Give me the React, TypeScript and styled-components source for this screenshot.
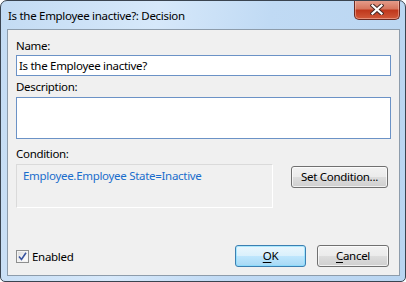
import React from "react";
import styled, { createGlobalStyle } from "styled-components";

const GlobalStyle = createGlobalStyle`
  html, body {
    margin: 0;
    padding: 0;
    background: #ffffff;
  }
  body {
    font-family: "Noto Sans", "Open Sans", sans-serif;
    font-size: 11.5px;
    letter-spacing: -0.3px;
    color: #000;
  }
`;

const Window = styled.div`
  box-sizing: border-box;
  width: 406px;
  height: 282px;
  display: flex;
  flex-direction: column;
  border: 1px solid #3a4450;
  border-radius: 7px 7px 5px 5px;
  background: linear-gradient(100deg, #c3dbf3 0%, #d6e8fa 35%, #c0daf4 60%, #b9d5f1 100%);
  overflow: hidden;
`;

const TitleBar = styled.div`
  height: 28px;
  display: flex;
  justify-content: space-between;
  align-items: flex-start;
  padding: 0 5px 0 7px;
`;

const TitleText = styled.div`
  margin-top: 7px;
  line-height: 16px;
  font-size: 11.5px;
  color: #000;
`;

const CloseButton = styled.div`
  box-sizing: border-box;
  width: 46px;
  height: 20px;
  margin-top: -1px;
  border: 1px solid #6b2a22;
  border-top: none;
  border-radius: 0 0 5px 5px;
  background: linear-gradient(#e6a08f 0%, #d7775f 45%, #c0381d 55%, #d1593a 100%);
  box-shadow: inset 0 0 0 1px rgba(255, 210, 200, 0.45);
  display: flex;
  align-items: center;
  justify-content: center;
`;

const Client = styled.div`
  flex: 1;
  margin: 0 5px 5px 6px;
  border: 1px solid #8d9cab;
  background: #f0f0f0;
  padding: 8px;
  display: flex;
  flex-direction: column;
`;

const Label = styled.div<{ $gap: number }>`
  line-height: 16px;
  margin-bottom: ${(p) => p.$gap}px;
`;

const TextInput = styled.div`
  box-sizing: border-box;
  height: 21px;
  border: 1px solid #6b92c6;
  background: #fff;
  padding: 1px 2px;
  line-height: 17px;
  margin-bottom: 3px;
`;

const TextArea = styled.div`
  box-sizing: border-box;
  height: 42px;
  border: 1px solid #6b92c6;
  background: #fff;
  margin-bottom: 7px;
`;

const ConditionRow = styled.div`
  display: flex;
  align-items: flex-start;
  gap: 18px;
`;

const ConditionBox = styled.div`
  box-sizing: border-box;
  width: 257px;
  height: 44px;
  border: 1px solid #dadada;
  border-right-color: #ffffff;
  border-bottom-color: #ffffff;
  padding: 3px 6px;
  color: #1a6dcc;
  line-height: 16px;
`;

const Button = styled.div<{ $default?: boolean; $width: number }>`
  box-sizing: border-box;
  width: ${(p) => p.$width}px;
  height: 22px;
  border: 1px solid ${(p) => (p.$default ? "#3c7fb1" : "#707070")};
  border-radius: 3px;
  background: ${(p) =>
    p.$default
      ? "linear-gradient(#eaf6fd 0%, #d9f0fc 50%, #bee6fd 51%, #a7d9f5 100%)"
      : "linear-gradient(#f2f2f2 0%, #ebebeb 50%, #dddddd 51%, #cfcfcf 100%)"};
  box-shadow: inset 0 0 0 1px
    ${(p) => (p.$default ? "rgba(120, 220, 255, 0.55)" : "rgba(255, 255, 255, 0.7)")};
  display: flex;
  align-items: center;
  justify-content: center;
  line-height: 16px;
`;

const SetButton = styled(Button)`
  margin-top: 2px;
`;

const Spacer = styled.div`
  flex: 1;
`;

const BottomRow = styled.div`
  display: flex;
  align-items: center;
`;

const CheckRow = styled.div`
  display: flex;
  align-items: center;
  gap: 3px;
  flex: 1;
`;

const CheckBox = styled.div`
  box-sizing: border-box;
  width: 13px;
  height: 13px;
  border: 1px solid #8e8f8f;
  background: linear-gradient(135deg, #d8d8d8 0%, #f4f4f4 60%, #ffffff 100%);
  box-shadow: inset 0 0 0 1px #f4f4f4;
  display: flex;
  align-items: center;
  justify-content: center;
`;

const ButtonGroup = styled.div`
  display: flex;
  gap: 11px;
  margin-right: 2px;
`;

const Mnemonic = styled.span`
  text-decoration: underline;
  text-underline-offset: 2px;
`;

export default function App() {
  return (
    <>
      <GlobalStyle />
      <Window>
        <TitleBar>
          <TitleText>Is the Employee inactive?: Decision</TitleText>
          <CloseButton>
            <svg width="14" height="11" viewBox="0 0 14 11">
              <path
                d="M2.5 1.5 L11.5 9.5 M11.5 1.5 L2.5 9.5"
                stroke="#4a2a26"
                strokeWidth="4.2"
                strokeLinecap="square"
              />
              <path
                d="M2.5 1.5 L11.5 9.5 M11.5 1.5 L2.5 9.5"
                stroke="#ffffff"
                strokeWidth="2.2"
                strokeLinecap="square"
              />
            </svg>
          </CloseButton>
        </TitleBar>
        <Client>
          <Label $gap={1}>Name:</Label>
          <TextInput>Is the Employee inactive?</TextInput>
          <Label $gap={2}>Description:</Label>
          <TextArea />
          <Label $gap={2}>Condition:</Label>
          <ConditionRow>
            <ConditionBox>Employee.Employee State=Inactive</ConditionBox>
            <SetButton $width={97}>Set Condition...</SetButton>
          </ConditionRow>
          <Spacer />
          <BottomRow>
            <CheckRow>
              <CheckBox>
                <svg width="9" height="9" viewBox="0 0 9 9">
                  <path
                    d="M1 4.5 L3.5 7.5 L8 0.8"
                    fill="none"
                    stroke="#3a55a0"
                    strokeWidth="1.6"
                  />
                </svg>
              </CheckBox>
              <span>Enabled</span>
            </CheckRow>
            <ButtonGroup>
              <Button $default $width={71}>
                <Mnemonic>O</Mnemonic>K
              </Button>
              <Button $width={72}>
                <Mnemonic>C</Mnemonic>ancel
              </Button>
            </ButtonGroup>
          </BottomRow>
        </Client>
      </Window>
    </>
  );
}
